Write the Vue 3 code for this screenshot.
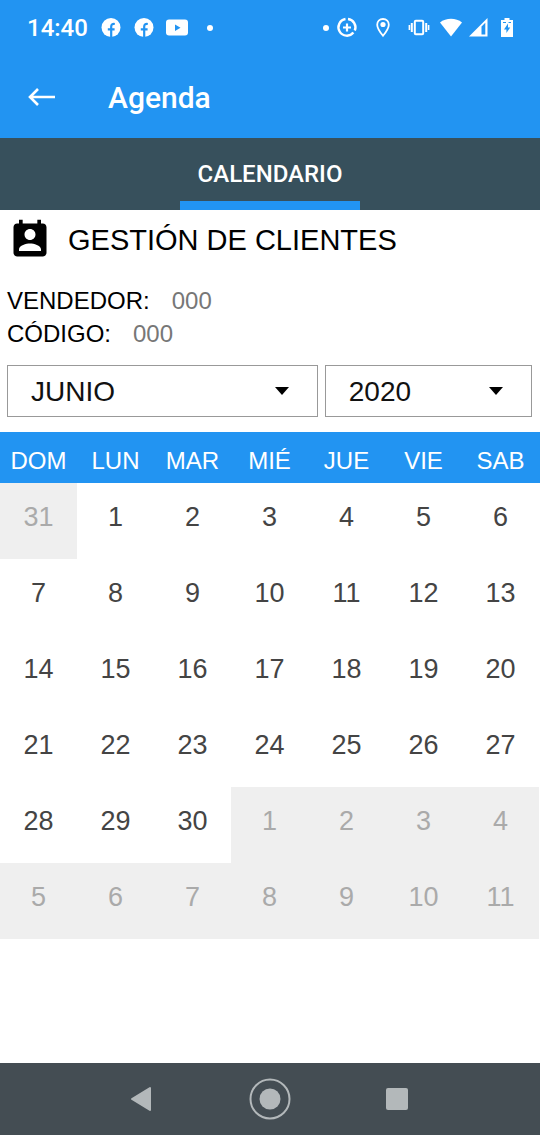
<template>
  <div class="screen">
    <header class="header">
      <div class="status-bar">
        <div class="status-left">
          <span class="clock">14:40</span>
          <span v-for="n in 2" :key="n" class="slot">
            <svg width="24" height="24" viewBox="0 0 24 24">
              <circle cx="12" cy="11.5" r="9.5" fill="#fff" />
              <path
                d="M12.2 22v-9M8.8 13.4h6.8M12.2 14v-3.4c0-2 1.2-2.9 3.6-2.6"
                fill="none"
                stroke="#2294f2"
                stroke-width="2.2"
              />
            </svg>
          </span>
          <span class="slot">
            <svg width="24" height="24" viewBox="0 0 24 24">
              <rect x="1" y="3.5" width="22" height="16" rx="3" fill="#fff" />
              <path d="M10 8.5v6.4l5.500-3.200z" fill="#2294f2" />
            </svg>
          </span>
          <span class="slot"><i class="dot"></i></span>
        </div>
        <div class="status-right">
          <i class="dot"></i>
          <span class="slot slot-wide">
            <svg width="24" height="24" viewBox="0 0 24 24" fill="none" stroke="#fff">
              <path d="M13 3A8.400 8.400 0 0 1 19.800 14.500" stroke-width="2.400" />
              <path d="M18.400 16.600A8.400 8.400 0 1 1 10.500 3" stroke-width="2.400" />
              <path d="M12 7.500v8M8 11.500h8" stroke-width="2.200" />
            </svg>
          </span>
          <span class="slot slot-wide">
            <svg width="24" height="24" viewBox="0 0 24 24">
              <path
                d="M12 3C8.500 3 6.200 5.400 6.200 8.700c0 4 5.800 11.100 5.800 11.100s5.800-7.100 5.800-11.100C17.800 5.400 15.500 3 12 3z"
                fill="none"
                stroke="#fff"
                stroke-width="1.800"
              />
              <circle cx="12" cy="8.500" r="2.600" fill="#fff" />
            </svg>
          </span>
          <span class="slot slot-wide">
            <svg width="24" height="24" viewBox="0 0 24 24" fill="none" stroke="#fff">
              <rect x="7.800" y="4.800" width="8.400" height="13.400" rx="1" stroke-width="2" />
              <path d="M4.800 7v9M19.200 7v9" stroke-width="2" />
              <path d="M2.400 9v5M21.600 9v5" stroke-width="1.600" />
            </svg>
          </span>
          <span class="slot slot-narrow">
            <svg width="24" height="24" viewBox="0 0 24 24">
              <path d="M1 6.500c6-5 16-5 22 0L12 20.500z" fill="#fff" />
            </svg>
          </span>
          <span class="slot slot-narrow">
            <svg width="24" height="24" viewBox="0 0 24 24">
              <path
                d="M2 20.500L20.500 2v18.500zM14.500 10.500V18.500H18.300V6.800z"
                fill="#fff"
                fill-rule="evenodd"
              />
            </svg>
          </span>
          <span class="slot slot-narrow">
            <svg width="24" height="24" viewBox="0 0 24 24">
              <path d="M9.500 2h5v2H18v17H6V4h3.500z" fill="#fff" />
              <path d="M8 6.500h3M13.500 6.500h2.500" stroke="#2294f2" />
              <path d="M13 7.500l-4 6h2.400V17l3.800-5.500h-2.200z" fill="#2294f2" />
            </svg>
          </span>
        </div>
      </div>
      <div class="app-bar">
        <button class="back" type="button" aria-label="Volver">
          <svg width="30" height="24" viewBox="0 0 30 24">
            <path
              d="M28 12H3M11 4L3 12l8 8"
              fill="none"
              stroke="#fff"
              stroke-width="2.600"
            />
          </svg>
        </button>
        <h1 class="app-title">Agenda</h1>
      </div>
    </header>

    <nav class="tabs">
      <a class="tab" href="#calendario">CALENDARIO</a>
    </nav>

    <main id="calendario" class="content">
      <div class="heading">
        <svg width="44" height="44" viewBox="0 0 24 24">
          <path
            d="M19 3h-1V1h-2v2H8V1H6v2H5c-1.110 0-2 .9-2 2v14c0 1.100.890 2 2 2h14c1.100 0 2-.9 2-2V5c0-1.100-.9-2-2-2zm-7 3c1.660 0 3 1.340 3 3s-1.340 3-3 3-3-1.340-3-3 1.340-3 3-3zm6 12H6v-1c0-2 4-3.100 6-3.100s6 1.100 6 3.100v1z"
          />
        </svg>
        <h2 class="title">GESTIÓN DE CLIENTES</h2>
      </div>

      <dl class="info">
        <div v-for="item in info" :key="item.label" class="info-row">
          <dt>{{ item.label }}</dt>
          <dd>{{ item.value }}</dd>
        </div>
      </dl>

      <div class="filters">
        <div class="field">
          <select v-model="month" aria-label="Mes">
            <option v-for="name in months" :key="name">{{ name }}</option>
          </select>
          <svg class="caret" width="14" height="8" viewBox="0 0 14 8">
            <path d="M0 0h14L7 8z" />
          </svg>
        </div>
        <div class="field">
          <select v-model="year" aria-label="Año">
            <option v-for="value in years" :key="value">{{ value }}</option>
          </select>
          <svg class="caret" width="14" height="8" viewBox="0 0 14 8">
            <path d="M0 0h14L7 8z" />
          </svg>
        </div>
      </div>

      <div class="calendar-wrap">
        <table class="calendar">
          <thead>
            <tr>
              <th v-for="day in weekdays" :key="day" scope="col">{{ day }}</th>
            </tr>
          </thead>
          <tbody>
            <tr v-for="(week, index) in weeks" :key="index">
              <td v-for="cell in week" :key="cell.key">
                <button type="button" class="day" :class="{ outside: cell.outside }">
                  {{ cell.day }}
                </button>
              </td>
            </tr>
          </tbody>
        </table>
      </div>
    </main>

    <footer class="nav-bar">
      <button type="button" aria-label="Atrás">
        <svg width="42" height="42" viewBox="0 0 42 42">
          <path
            d="M10 21L28 10V32z"
            fill="#b3b8ba"
            stroke="#b3b8ba"
            stroke-width="2"
            stroke-linejoin="round"
          />
        </svg>
      </button>
      <button type="button" aria-label="Inicio">
        <svg width="42" height="42" viewBox="0 0 42 42">
          <circle cx="21" cy="21" r="19.500" fill="none" stroke="#b3b8ba" stroke-width="2" />
          <circle cx="21" cy="21" r="10.500" fill="#b3b8ba" />
        </svg>
      </button>
      <button type="button" aria-label="Recientes">
        <svg width="42" height="42" viewBox="0 0 42 42">
          <rect x="10" y="10" width="22" height="22" rx="2" fill="#b3b8ba" />
        </svg>
      </button>
    </footer>
  </div>
</template>

<script setup>
import { computed, ref } from 'vue'

const info = [
  { label: 'VENDEDOR:', value: '000' },
  { label: 'CÓDIGO:', value: '000' },
]

const months = [
  'ENERO',
  'FEBRERO',
  'MARZO',
  'ABRIL',
  'MAYO',
  'JUNIO',
  'JULIO',
  'AGOSTO',
  'SEPTIEMBRE',
  'OCTUBRE',
  'NOVIEMBRE',
  'DICIEMBRE',
]
const years = ['2019', '2020', '2021']
const weekdays = ['DOM', 'LUN', 'MAR', 'MIÉ', 'JUE', 'VIE', 'SAB']

const month = ref('JUNIO')
const year = ref('2020')

// six full weeks, starting on the Sunday on or before the 1st
const weeks = computed(() => {
  const y = Number(year.value)
  const m = months.indexOf(month.value)
  const offset = new Date(y, m, 1).getDay()
  return Array.from({ length: 6 }, (_, w) =>
    Array.from({ length: 7 }, (_, d) => {
      const date = new Date(y, m, 1 - offset + w * 7 + d)
      return {
        key: `${date.getMonth()}-${date.getDate()}`,
        day: date.getDate(),
        outside: date.getMonth() !== m,
      }
    })
  )
})
</script>

<style>
body {
  margin: 0;
  background: #fff;
}
</style>

<style scoped>
.screen {
  display: flex;
  flex-direction: column;
  min-height: 100vh;
  font-family: 'Liberation Sans', Arial, sans-serif;
  color: #000;
}

button {
  padding: 0;
  border: 0;
  background: none;
  font: inherit;
  cursor: pointer;
}

svg {
  display: block;
}

.header {
  background: #2294f2;
  color: #fff;
  font-family: Roboto, sans-serif;
}

.status-bar {
  display: flex;
  justify-content: space-between;
  height: 56px;
  padding: 0 19px 0 27px;
}

.status-left,
.status-right {
  display: flex;
  align-items: center;
}

.clock {
  margin-right: 7px;
  font-size: 24px;
  font-weight: 500;
}

.slot {
  display: flex;
  justify-content: center;
  width: 33px;
}

.slot-wide {
  width: 36px;
}

.slot-narrow {
  width: 28px;
}

.dot {
  width: 6px;
  height: 6px;
  border-radius: 50%;
  background: #fff;
}

.app-bar {
  display: flex;
  align-items: center;
  gap: 51px;
  height: 82px;
  padding: 0 27px;
}

.app-title {
  margin: 0;
  font-size: 30px;
  font-weight: 500;
}

.tabs {
  display: flex;
  justify-content: center;
  height: 72px;
  background: #37505c;
}

.tab {
  box-sizing: border-box;
  padding: 0 18px;
  border-bottom: 9px solid #2294f2;
  color: #fff;
  font-family: Roboto, sans-serif;
  font-size: 24px;
  font-weight: 500;
  line-height: 72px;
  text-decoration: none;
}

.content {
  flex: 1;
}

.heading {
  display: flex;
  align-items: center;
  gap: 16px;
  height: 60px;
  padding: 0 8px;
}

.title {
  margin: 0;
  font-size: 29px;
  font-weight: 400;
}

.info {
  margin: 0;
  padding: 14px 8px 15px 7px;
  font-size: 24px;
  line-height: 33px;
}

.info-row {
  display: flex;
  gap: 22px;
}

.info-row dd {
  margin: 0;
  color: #777;
}

.filters {
  display: grid;
  grid-template-columns: 3fr 2fr;
  gap: 7px;
  padding: 0 8px 15px 7px;
}

.field {
  position: relative;
}

.field select {
  appearance: none;
  display: block;
  width: 100%;
  height: 52px;
  padding: 0 48px 0 23px;
  border: 1px solid #999;
  border-radius: 0;
  background: #fff;
  color: #111;
  font-family: inherit;
  font-size: 28px;
}

.caret {
  position: absolute;
  top: 22px;
  right: 29px;
  pointer-events: none;
}

.calendar-wrap {
  padding-right: 1px;
  background: linear-gradient(#2294f2, #2294f2) top / 100% 51px no-repeat;
}

.calendar {
  width: 100%;
  table-layout: fixed;
  border-collapse: collapse;
}

.calendar th {
  height: 51px;
  padding: 6px 0 0;
  box-sizing: border-box;
  background: #2294f2;
  color: #fff;
  font-size: 24px;
  font-weight: 400;
}

.calendar td {
  padding: 0;
}

.day {
  display: block;
  width: 100%;
  height: 76px;
  padding-bottom: 8px;
  color: #444;
  font-size: 27px;
  text-align: center;
}

.day.outside {
  background: #efefef;
  color: #aaa;
}

.nav-bar {
  display: flex;
  align-items: center;
  justify-content: center;
  gap: 85px;
  height: 72px;
  background: #444d53;
}
</style>
